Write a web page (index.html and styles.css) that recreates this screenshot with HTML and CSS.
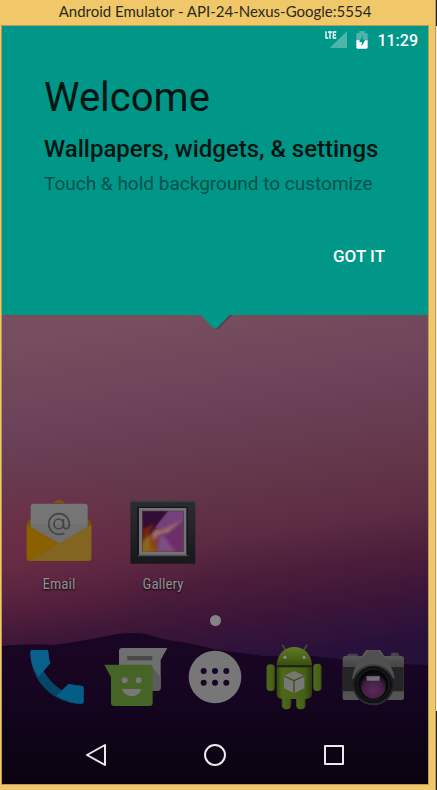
FILE: index.html
```html
<!DOCTYPE html>
<html lang="en">
<head>
<meta charset="utf-8">
<meta name="viewport" content="width=device-width, initial-scale=1">
<title>Android Emulator - API-24-Nexus-Google:5554</title>
<link rel="stylesheet" href="styles.css">
</head>
<body>
<div class="window">
  <header class="titlebar">Android Emulator - API-24-Nexus-Google:5554</header>
  <main class="screen">
    <section class="welcome">
      <div class="status">
        <svg class="signal" viewBox="0 0 66 54" aria-hidden="true">
          <path d="M66 0V51H14Z" fill="#4db5ab"/>
          <path d="M0 0H36V25H0Z" fill="#009688"/>
          <path d="M3 1V21H10M9 3H21M15 3V23M34 3H25V21H34M25 12H33" fill="none" stroke="#fff" stroke-width="4"/>
        </svg>
        <svg class="battery" viewBox="0 0 36 54" aria-hidden="true">
          <path d="M10 0H26V6H31Q35 6 35 10V29H1V10Q1 6 5 6H10Z" fill="#4db5ab"/>
          <path d="M1 28H35V49Q35 53 31 53H5Q1 53 1 49Z" fill="#fff"/>
          <path d="M22 13L9 33H17V46L28 26H20Z" fill="#009688"/>
        </svg>
        <time class="clock">11:29</time>
      </div>
      <h1>Welcome</h1>
      <h2>Wallpapers, widgets, &amp; settings</h2>
      <p>Touch &amp; hold background to customize</p>
      <button class="got-it" type="button">GOT IT</button>
      <svg class="pointer" viewBox="0 0 32 16" aria-hidden="true">
        <path d="M4 0H32L19 13Q17 15 15 13Z" fill="#3c2530" opacity=".5"/>
        <path d="M1 0H30L17 13Q15 14 13 13Z" fill="#009688"/>
      </svg>
    </section>

    <div class="home">
      <svg class="wallpaper" viewBox="0 0 426 469" preserveAspectRatio="none" aria-hidden="true">
        <defs>
          <linearGradient id="sky" gradientUnits="userSpaceOnUse" x1="190" y1="0" x2="240" y2="350">
            <stop offset="0" stop-color="#774e5d"/>
            <stop offset=".25" stop-color="#6b4259"/>
            <stop offset=".5" stop-color="#633548"/>
            <stop offset=".64" stop-color="#5b2b43"/>
            <stop offset=".76" stop-color="#4c1d3a"/>
            <stop offset=".87" stop-color="#3b1538"/>
            <stop offset=".96" stop-color="#2e123a"/>
            <stop offset="1" stop-color="#27103a"/>
          </linearGradient>
          <radialGradient id="glow">
            <stop offset="0" stop-color="#7a2846" stop-opacity=".4"/>
            <stop offset="1" stop-color="#7a2846" stop-opacity="0"/>
          </radialGradient>
          <linearGradient id="ground" x2="0" y2="1">
            <stop offset="0" stop-color="#190624"/>
            <stop offset=".4" stop-color="#160521"/>
            <stop offset=".7" stop-color="#0e0417"/>
            <stop offset="1" stop-color="#0a030f"/>
          </linearGradient>
        </defs>
        <path d="M0 0H426V469H0Z" fill="url(#sky)"/>
        <ellipse cx="0" cy="235" rx="210" ry="90" fill="url(#glow)"/>
        <path d="M0 331Q30 328 52 330C75 327 100 322 115 319Q130 317 145 319Q160 325 180 327Q205 332 216 335Q240 338 260 341H310Q350 346 400 349L426 350V469H0Z" fill="url(#ground)"/>
      </svg>

      <nav class="apps" aria-label="Home screen">
        <a class="app" href="#email">
          <svg viewBox="76 594 198 198" aria-hidden="true">
            <path d="M157 609Q175 591 193 609Z" fill="#875500"/>
            <path d="M78 675Q78 664 90 658H260Q272 664 272 675V774Q272 783 263 783H87Q78 783 78 774Z" fill="#7e5200"/>
            <path d="M90 620Q90 611 99 611H252Q261 611 261 620V684L175 731L90 684Z" fill="#757575"/>
            <path d="M90 672H261V684L175 731L90 684Z" fill="#6f6f6f"/>
            <path d="M78 674L175 730L84 782Q78 780 78 774Z" fill="#8a6000"/>
            <path d="M272 674L175 730L84 782H263Q272 782 272 774Z" fill="#826520"/>
            <path d="M191 700Q181 703 173 703A31 31 0 1 1 206 671Q206 686 196 686Q188 686 188 676V657M188 672A14 15 0 1 1 160 672A14 15 0 1 1 188 672" fill="none" stroke="#454545" stroke-width="5"/>
          </svg>
          <span>Email</span>
        </a>
        <a class="app" href="#gallery">
          <svg viewBox="389 594 198 198" aria-hidden="true">
            <defs>
              <linearGradient id="photo" x1="0" y1="1" x2="1" y2="0">
                <stop offset="0" stop-color="#8b7310"/>
                <stop offset=".23" stop-color="#8a421b"/>
                <stop offset=".5" stop-color="#783057"/>
                <stop offset="1" stop-color="#743b76"/>
              </linearGradient>
              <linearGradient id="frame" x2="0" y2="1">
                <stop offset="0" stop-color="#2d2c32"/>
                <stop offset="1" stop-color="#18181c"/>
              </linearGradient>
              <filter id="soft"><feGaussianBlur stdDeviation="4"/></filter>
              <clipPath id="photo-clip"><path d="M427 634H548V755H427Z"/></clipPath>
            </defs>
            <path d="M390 601H585V791H390Z" fill="url(#frame)"/>
            <path d="M390 601H585V605H390Z" fill="#45454a"/>
            <path d="M411 620H562V770H411Z" fill="#151519"/>
            <path d="M411 769L418 763H557L566 769Z" fill="#515156"/>
            <path d="M416 624H558V764H416Z" fill="#737378"/>
            <path d="M425 632H550V756H425Z" fill="#37343a"/>
            <path d="M427 634H548V755H427Z" fill="url(#photo)"/>
            <g clip-path="url(#photo-clip)">
              <path d="M420 628H508L455 700L426 725Z" fill="#300834" filter="url(#soft)"/>
              <path d="M425 690L462 670L430 735Z" fill="#7b220f" filter="url(#soft)"/>
              <path d="M504 634H548V665L490 690L465 682Z" fill="#754179"/>
              <path d="M470 716L550 665V755H475Z" fill="#6c2d67" filter="url(#soft)"/>
              <path d="M455 702Q463 685 485 690L548 660L500 700Q477 699 459 722Z" fill="#9a6f70" filter="url(#soft)"/>
              <path d="M472 755Q472 711 486 702L525 755Z" fill="#7c4f82" filter="url(#soft)"/>
              <path d="M427 724L451 699L444 754H427Z" fill="#8b6812" filter="url(#soft)"/>
            </g>
          </svg>
          <span>Gallery</span>
        </a>
      </nav>

      <div class="page-dot"></div>

      <nav class="dock" aria-label="Dock">
        <a href="#phone" aria-label="Phone">
          <svg viewBox="71 1032 198 198" aria-hidden="true">
            <path d="M90 1055Q90 1050 96 1050H139Q144 1050 144 1056Q145 1076 150 1090L129 1110Q146 1145 185 1171L207 1152Q225 1157 243 1157Q250 1157 250 1164V1205Q250 1211 243 1211C158 1210 90 1144 90 1055Z" fill="#054565"/>
            <path d="M90 1055Q90 1050 96 1050H139Q144 1050 144 1056Q145 1076 150 1090L115 1130Q90 1097 90 1055Z" fill="#09618b"/>
            <path d="M169 1187L203 1153Q206 1151 210 1153Q225 1157 243 1157Q250 1157 250 1164V1205Q250 1211 243 1211Q202 1210 169 1187Z" fill="#045d87"/>
          </svg>
        </a>
        <a href="#messages" aria-label="Messages">
          <svg viewBox="309 1032 198 198" aria-hidden="true">
            <path d="M357 1053Q357 1044 366 1044H502L482 1080V1163Q482 1172 473 1172H357Z" fill="#6f6f6f"/>
            <path d="M457 1102L482 1131V1163Q482 1172 473 1172H457Z" fill="#5c5c5c"/>
            <path d="M382 1068H457V1081H382Z" fill="#484848"/>
            <path d="M313 1094H449Q458 1094 458 1103V1209Q458 1218 449 1218H342Q333 1218 333 1209V1132Z" fill="#466425"/>
            <circle cx="374" cy="1141" r="9" fill="#777"/>
            <circle cx="416" cy="1141" r="9" fill="#777"/>
            <path d="M366 1167H424Q418 1189 395 1189Q373 1189 366 1167Z" fill="#777"/>
          </svg>
        </a>
        <a href="#all-apps" aria-label="All apps">
          <svg viewBox="545 1032 198 198" aria-hidden="true">
            <circle cx="644" cy="1131" r="79" fill="#777"/>
            <g fill="#18052a">
              <circle cx="610" cy="1113" r="9"/><circle cx="644" cy="1113" r="9"/><circle cx="678" cy="1113" r="9"/>
              <circle cx="610" cy="1148" r="9"/><circle cx="644" cy="1148" r="9"/><circle cx="678" cy="1148" r="9"/>
            </g>
          </svg>
        </a>
        <a href="#api-demos" aria-label="API Demos">
          <svg viewBox="782 1032 198 198" aria-hidden="true">
            <defs>
              <linearGradient id="droid">
                <stop offset="0" stop-color="#354710"/>
                <stop offset=".15" stop-color="#4d681a"/>
                <stop offset=".8" stop-color="#465f16"/>
                <stop offset="1" stop-color="#2d3d0d"/>
              </linearGradient>
              <linearGradient id="droid-head" x2="0" y2="1">
                <stop offset="0" stop-color="#617a2b"/>
                <stop offset=".5" stop-color="#4c6718"/>
                <stop offset="1" stop-color="#394d11"/>
              </linearGradient>
            </defs>
            <path d="M847 1036L857 1053M919 1036L909 1053" stroke="#42551c" stroke-width="5" stroke-linecap="round"/>
            <g fill="url(#droid)">
              <rect x="844" y="1180" width="29" height="48" rx="13"/>
              <rect x="887" y="1180" width="29" height="48" rx="13"/>
              <rect x="798" y="1093" width="26" height="80" rx="12"/>
              <rect x="938" y="1091" width="26" height="82" rx="12"/>
              <path d="M829 1102H935V1180Q935 1197 918 1197H846Q829 1197 829 1180Z"/>
            </g>
            <path d="M829 1096C830 1061 854 1041 882 1041S934 1061 935 1096Z" fill="url(#droid-head)"/>
            <path d="M829 1098H935" stroke="#243109" stroke-width="5"/>
            <circle cx="854" cy="1072" r="5" fill="#888"/><circle cx="911" cy="1072" r="5" fill="#888"/>
            <path d="M851 1127L881 1113L912 1127V1165L881 1180L851 1165Z" fill="#767876"/>
            <path d="M851 1128L881 1142L912 1128M881 1142V1180" fill="none" stroke="#3c5019" stroke-width="4"/>
          </svg>
        </a>
        <a href="#camera" aria-label="Camera">
          <svg viewBox="1018 1032 198 198" aria-hidden="true">
            <defs>
              <linearGradient id="metal" x2="0" y2="1">
                <stop offset="0" stop-color="#646464"/>
                <stop offset=".3" stop-color="#474747"/>
                <stop offset="1" stop-color="#555"/>
              </linearGradient>
              <radialGradient id="lens" cx=".5" cy=".65" r=".65">
                <stop offset="0" stop-color="#5b285d"/>
                <stop offset=".6" stop-color="#432044"/>
                <stop offset="1" stop-color="#0c0a0e"/>
              </radialGradient>
              <linearGradient id="ring" x2="0" y2="1">
                <stop offset="0" stop-color="#404040"/>
                <stop offset=".4" stop-color="#1b1b1c"/>
                <stop offset="1" stop-color="#2b2c36"/>
              </linearGradient>
            </defs>
            <path d="M1037 1069L1043 1061H1069L1074 1069ZM1169 1069L1173 1058H1192L1197 1069Z" fill="#464646"/>
            <path d="M1026 1077Q1026 1068 1035 1068H1084L1097 1050H1138L1151 1068H1201Q1210 1068 1210 1077V1194Q1210 1200 1204 1200H1032Q1026 1200 1026 1194Z" fill="url(#metal)"/>
            <path d="M1027 1101H1068V1174H1027ZM1163 1101H1209V1174H1163Z" fill="#252528"/>
            <path d="M1054 1136Q1062 1085 1092 1067L1101 1051H1134L1144 1067Q1175 1090 1182 1136Z" fill="#505050"/>
            <circle cx="1118" cy="1154" r="62" fill="url(#ring)"/>
            <circle cx="1118" cy="1154" r="56" fill="#111112"/>
            <circle cx="1118" cy="1154" r="47" fill="#070708" stroke="#1f1f22" stroke-width="3"/>
            <circle cx="1118" cy="1158" r="38" fill="url(#lens)"/>
            <path d="M1097 1129H1138L1136 1142H1099Z" fill="#747078"/>
          </svg>
        </a>
      </nav>

      <div class="navbar">
        <button type="button" aria-label="Back">
          <svg viewBox="0 0 24 24" aria-hidden="true"><path d="M21 2V22L3 12Z"/></svg>
        </button>
        <button type="button" aria-label="Home">
          <svg viewBox="0 0 24 24" aria-hidden="true"><circle cx="12" cy="12" r="10"/></svg>
        </button>
        <button type="button" aria-label="Overview">
          <svg viewBox="0 0 24 24" aria-hidden="true"><path d="M3 3H21V21H3Z"/></svg>
        </button>
      </div>
    </div>
  </main>
</div>
</body>
</html>
```
FILE: styles.css
```css
* { box-sizing: border-box; }

body {
  margin: 0;
  background: linear-gradient(#222 0 26px, #f0efeb 26px 90%, #222 90%);
  font-family: Roboto, "Liberation Sans", sans-serif;
}

.window {
  display: flex;
  flex-direction: column;
  min-height: 100vh;
  margin-right: 1px;
  padding: 0 6px 5px 1px;
  background: #f0c869;
  border-right: 1px solid #b99b56;
}

.titlebar {
  height: 25px;
  color: #2c2820;
  font: 15px/22px Lato, "Open Sans", sans-serif;
  text-align: center;
  white-space: nowrap;
}

.screen {
  display: flex;
  flex: 1;
  flex-direction: column;
  border: 1px solid #b99b56;
}

.welcome {
  position: relative;
  z-index: 1;
  display: flex;
  flex-direction: column;
  height: 289px;
  padding: 0 43px 0 42px;
  background: #009688;
}

.status {
  display: flex;
  align-items: center;
  justify-content: flex-end;
  gap: 9px;
  height: 28px;
  margin-right: -33px;
  color: #fff;
}

.signal { width: 22px; height: 18px; }
.battery { width: 12px; height: 18px; }
.clock { font-size: 16px; font-weight: 500; }

h1, h2, p { margin: 0; }

h1 {
  margin-top: 17px;
  color: #001512;
  font-size: 40px;
  font-weight: 400;
  line-height: 54px;
}

h2 {
  margin-top: 8px;
  color: #001512;
  font-size: 24px;
  font-weight: 500;
  line-height: 32px;
  white-space: nowrap;
}

p {
  margin-top: 6px;
  color: #00524a;
  font-size: 19px;
  line-height: 26px;
  white-space: nowrap;
}

.got-it {
  align-self: flex-end;
  margin-top: 41px;
  padding: 6px 0;
  background: none;
  border: 0;
  color: #fff;
  font: 500 17px/24px Roboto, sans-serif;
}

.pointer {
  position: absolute;
  top: 100%;
  left: 50%;
  width: 32px;
  height: 16px;
  margin-left: -15px;
}

.home {
  position: relative;
  z-index: 0;
  display: flex;
  flex: 1;
  flex-direction: column;
  padding-top: 183px;
  box-shadow: inset 0 2px 2px #4a303b;
}

.wallpaper {
  position: absolute;
  inset: 0;
  z-index: -1;
  width: 100%;
  height: 100%;
}

.apps {
  display: grid;
  grid-template-columns: repeat(4, 1fr);
  padding: 0 5px;
}

.app {
  display: flex;
  flex-direction: column;
  align-items: center;
  gap: 10px;
  color: #929092;
  font-family: "Roboto Condensed", Roboto, sans-serif;
  font-size: 15px;
  font-stretch: condensed;
  line-height: 20px;
  text-decoration: none;
  text-shadow: 0 1px 2px #000;
}

.app svg, .dock svg {
  display: block;
  width: 66px;
  height: 66px;
}

.page-dot {
  align-self: center;
  width: 11px;
  height: 11px;
  margin-top: 21px;
  background: #858385;
  border-radius: 50%;
}

.dock {
  display: grid;
  grid-template-columns: repeat(5, 1fr);
  justify-items: center;
  margin-top: 18px;
  padding: 0 16px;
}

.navbar {
  display: grid;
  grid-template-columns: repeat(3, 1fr);
  margin-top: 21px;
  padding: 0 35px;
}

.navbar button {
  display: flex;
  justify-content: center;
  padding: 12px 0;
  background: none;
  border: 0;
}

.navbar svg {
  width: 24px;
  height: 24px;
  fill: none;
  stroke: #ebe9ec;
  stroke-width: 2;
  stroke-linejoin: round;
}
```
